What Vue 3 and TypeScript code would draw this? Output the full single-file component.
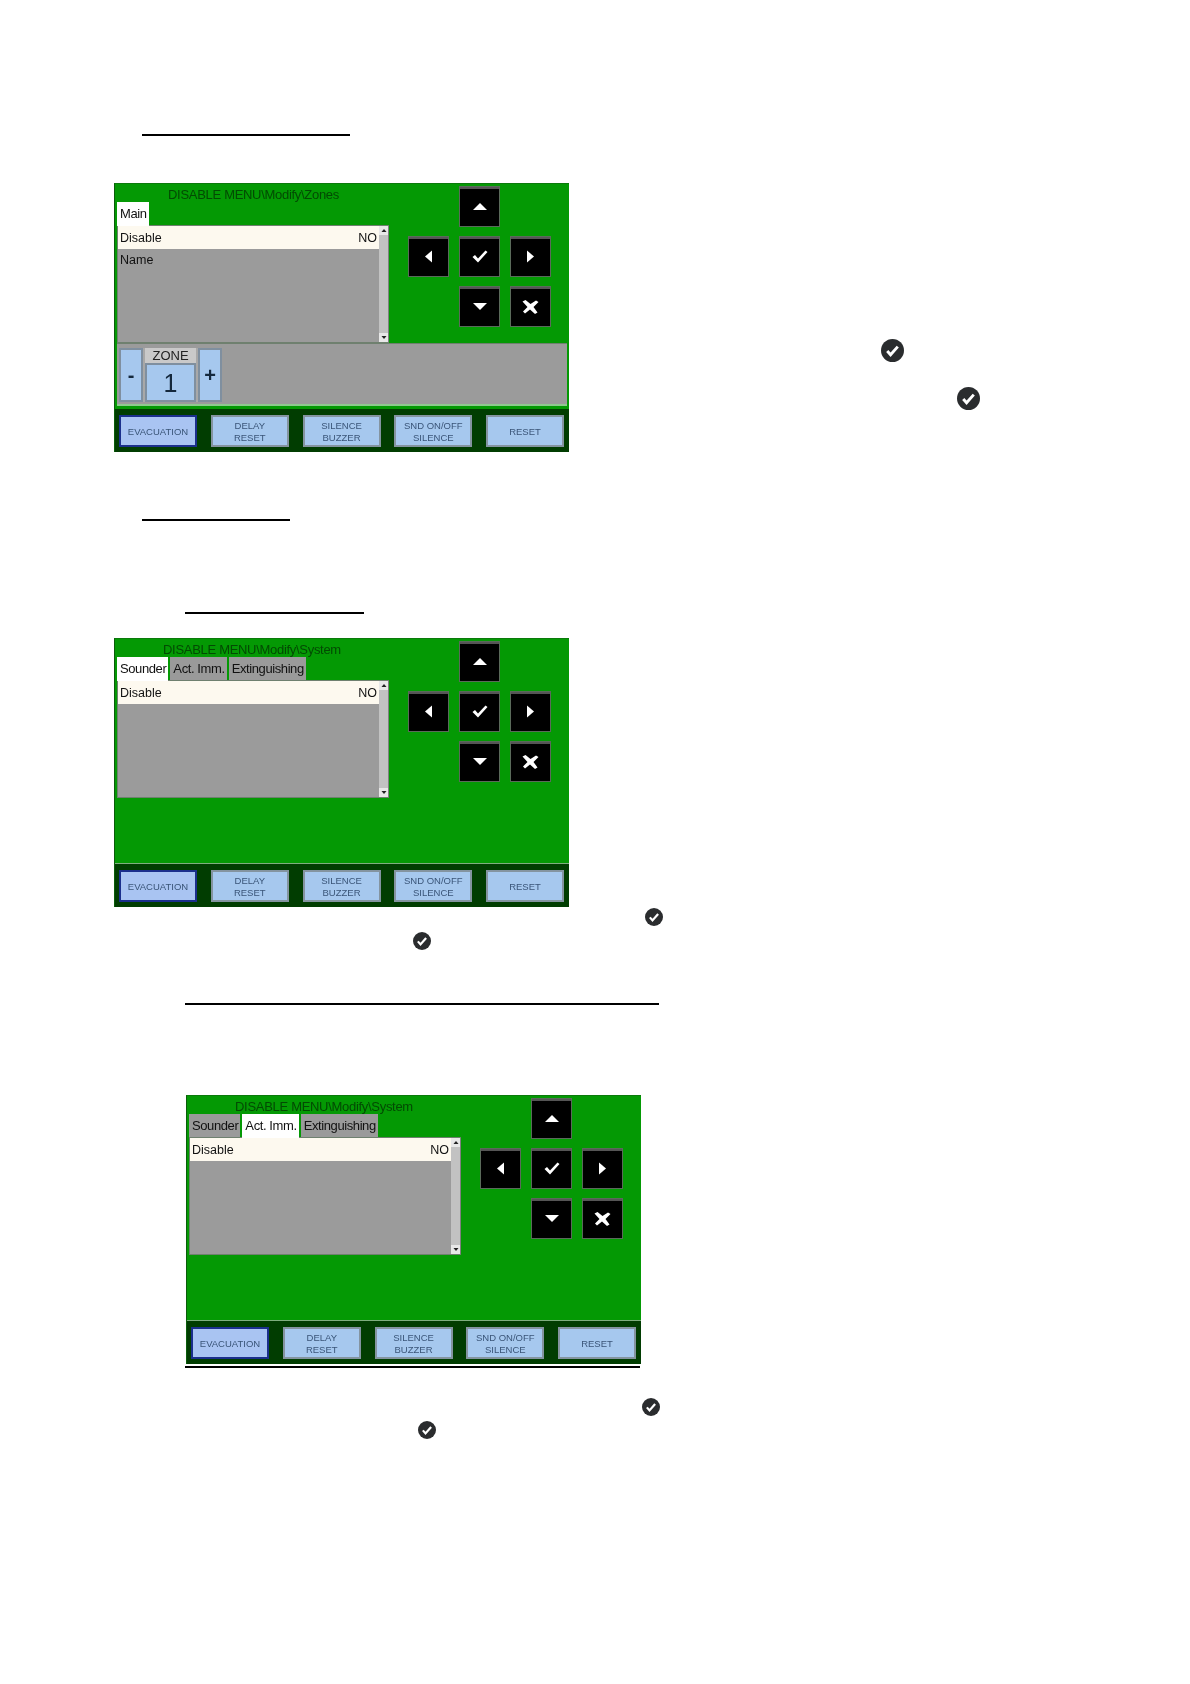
<script setup lang="ts">
interface Screen {
  title: string
  tabs: string[]
  active: number
  rows: { label: string; value?: string }[]
  zone?: boolean
}

const zones: Screen = {
  title: 'DISABLE MENU\\Modify\\Zones',
  tabs: ['Main'],
  active: 0,
  rows: [{ label: 'Disable', value: 'NO' }, { label: 'Name' }],
  zone: true,
}
const sounder: Screen = {
  title: 'DISABLE MENU\\Modify\\System',
  tabs: ['Sounder', 'Act. Imm.', 'Extinguishing'],
  active: 0,
  rows: [{ label: 'Disable', value: 'NO' }],
}
const actImm: Screen = { ...sounder, active: 1 }

const sections = [
  { screen: zones, before: 'r1', id: 'zones' },
  { screen: sounder, before: 'r3', id: 'sounder' },
  { screen: actImm, before: 'r4', id: 'act' },
]

const footer = [
  ['EVACUATION'],
  ['DELAY', 'RESET'],
  ['SILENCE', 'BUZZER'],
  ['SND ON/OFF', 'SILENCE'],
  ['RESET'],
]
</script>

<template>
  <div class="page">
    <template v-for="s in sections" :key="s.id">
      <div v-if="s.id === 'sounder'" class="rule r2"></div>
      <div class="rule" :class="s.before"></div>

      <div class="row" :class="'row-' + s.id">
        <div class="screen">
          <div class="top">
            <div class="left">
              <div class="title">{{ s.screen.title }}</div>
              <div class="tabs">
                <span
                  v-for="(t, i) in s.screen.tabs"
                  :key="t"
                  class="tab"
                  :class="{ on: i === s.screen.active }"
                >{{ t }}</span>
              </div>
              <div class="list">
                <div class="rows">
                  <div v-for="(r, i) in s.screen.rows" :key="r.label" class="item" :class="{ sel: i === 0 }">
                    <span>{{ r.label }}</span>
                    <span v-if="r.value">{{ r.value }}</span>
                  </div>
                </div>
                <div class="scroll">
                  <span class="sb"><svg width="6" height="5" viewBox="0 0 6 5"><path d="M3 1 5.500 4H.5z" /></svg></span>
                  <span class="sb"><svg width="6" height="5" viewBox="0 0 6 5"><path d="M3 4 5.500 1H.5z" /></svg></span>
                </div>
              </div>
            </div>

            <div class="nav">
              <button class="key k-up" type="button">
                <svg width="16" height="9" viewBox="0 0 16 9"><path d="M8 1 15 8H1z" /></svg>
              </button>
              <button class="key k-left" type="button">
                <svg width="9" height="13" viewBox="0 0 9 13"><path d="M1 6.500 8 .5V12.500z" /></svg>
              </button>
              <button class="key" type="button">
                <svg width="16" height="13" viewBox="0 0 16 13"><path d="M.5 7 3 5 6 8.500 13.500.5 15.500 2 6 12.500z" /></svg>
              </button>
              <button class="key" type="button">
                <svg width="9" height="13" viewBox="0 0 9 13"><path d="M8 6.500 1 .5V12.500z" /></svg>
              </button>
              <button class="key k-down" type="button">
                <svg width="16" height="9" viewBox="0 0 16 9"><path d="M8 8 15 1H1z" /></svg>
              </button>
              <button class="key" type="button">
                <svg width="17" height="14" viewBox="0 0 17 14"><path d="M.5 1.500 3.500 0 8.500 4 14 .5 16.500 2 11.500 7 15.500 12.500 13 14 8 9.500 3 13.500 1 11.500 5.500 7z" /></svg>
              </button>
            </div>
          </div>

          <div v-if="s.screen.zone" class="zonebar">
            <div class="stepper">
              <div class="step">-</div>
              <div class="zone">
                <div class="zone-label">ZONE</div>
                <div class="zone-value">1</div>
              </div>
              <div class="step">+</div>
            </div>
          </div>

          <div class="foot">
            <div v-for="(b, i) in footer" :key="i" class="fbtn" :class="{ cur: i === 0 }">
              <span v-for="l in b" :key="l">{{ l }}</span>
            </div>
          </div>
        </div>

        <div v-if="s.id === 'zones'" class="side">
          <svg class="tick big" viewBox="0 0 24 24"><circle cx="12" cy="12" r="12" /><path d="M6.500 12.500 10 16.500 17.500 8" /></svg>
          <svg class="tick big second" viewBox="0 0 24 24"><circle cx="12" cy="12" r="12" /><path d="M6.500 12.500 10 16.500 17.500 8" /></svg>
        </div>
      </div>

      <div v-if="s.id === 'act'" class="rule r5"></div>

      <div v-if="s.id === 'sounder'" class="notes n2">
        <svg class="tick a" viewBox="0 0 24 24"><circle cx="12" cy="12" r="12" /><path d="M6.500 12.500 10 16.500 17.500 8" /></svg>
        <svg class="tick b" viewBox="0 0 24 24"><circle cx="12" cy="12" r="12" /><path d="M6.500 12.500 10 16.500 17.500 8" /></svg>
      </div>
      <div v-if="s.id === 'act'" class="notes n3">
        <svg class="tick a" viewBox="0 0 24 24"><circle cx="12" cy="12" r="12" /><path d="M6.500 12.500 10 16.500 17.500 8" /></svg>
        <svg class="tick b" viewBox="0 0 24 24"><circle cx="12" cy="12" r="12" /><path d="M6.500 12.500 10 16.500 17.500 8" /></svg>
      </div>
    </template>
  </div>
</template>

<style>
html,
body {
  background: #fff;
}
</style>

<style scoped>
.page {
  height: 1684px;
  overflow: hidden;
  background: #fff;
  font-family: 'Liberation Sans', Arial, sans-serif;
  display: flow-root;
}

.rule {
  height: 2px;
  background: #000;
}
.r1 { margin: 134px 0 47px 142px; width: 208px; }
.r2 { margin: 67px 0 0 142px; width: 148px; }
.r3 { margin: 91px 0 24px 185px; width: 179px; }
.r4 { margin: 53px 0 90px 185px; width: 474px; }
.r5 { margin: 2px 0 0 185px; width: 455px; }

.row {
  display: flex;
  margin-left: 114px;
}
.row-act {
  margin-left: 186px;
}

.screen {
  width: 455px;
  height: 269px;
  box-sizing: border-box;
  background: #049904;
  border-left: 1px solid #0b5c0b;
  border-top: 1px solid #0b7a0b;
  display: flex;
  flex-direction: column;
  filter: blur(0.4px);
}

.top {
  flex: 1;
  display: flex;
  min-height: 0;
}

.left {
  width: 272px;
  padding-left: 2px;
}

.title {
  height: 18px;
  line-height: 22px;
  padding-left: 46px;
  font-size: 13px;
  letter-spacing: -0.3px;
  color: #034a03;
  white-space: nowrap;
}
.row-zones .title {
  padding-left: 51px;
}

.tabs {
  display: flex;
  gap: 2px;
  height: 23px;
}
.tab {
  padding: 0 2px 0 3px;
  font-size: 13px;
  letter-spacing: -0.4px;
  line-height: 23px;
  color: #111;
  background: #9a9a9a;
  white-space: nowrap;
}
.tab.on {
  background: #fff;
  height: 24px;
}

.list {
  display: flex;
  height: 118px;
  box-sizing: border-box;
  border: 1px solid #6f806f;
  border-right: 0;
  background: #9b9b9b;
}
.rows {
  flex: 1;
}
.item {
  height: 22.500px;
  box-sizing: border-box;
  padding: 1px 2px 0;
  display: flex;
  justify-content: space-between;
  align-items: center;
  font-size: 12.500px;
  color: #111;
}
.item.sel {
  background: #fdf9ef;
}

.scroll {
  width: 9px;
  background: #c2c2c2;
  border-right: 1px solid #808080;
  display: flex;
  flex-direction: column;
  justify-content: space-between;
}
.sb {
  height: 9px;
  background: #e8e8e8;
  display: flex;
  align-items: center;
  justify-content: center;
}
.sb svg {
  fill: #222;
}

.nav {
  display: grid;
  grid-template-columns: repeat(3, 41px);
  grid-template-rows: repeat(3, 41px);
  gap: 9px 10px;
  margin: 2px 0 0 19px;
  align-self: flex-start;
}
.key {
  padding: 0;
  box-sizing: border-box;
  background: #000;
  border: 1px solid #5a6a5a;
  box-shadow: inset 0 2px 0 #555;
  display: flex;
  align-items: center;
  justify-content: center;
}
.key svg {
  fill: #fff;
}
.k-up { grid-column: 2; }
.k-left { grid-column: 1; }
.k-down { grid-column: 2; }

.zonebar {
  height: 63px;
  margin-left: 2px;
  width: 450px;
  box-sizing: border-box;
  background: #9b9b9b;
  border-top: 1px solid #6f806f;
  border-bottom: 2px solid #8fc98f;
  padding: 4px 0 0 2px;
}
.stepper {
  display: inline-flex;
  gap: 2px;
  align-items: stretch;
  height: 54px;
  background: #a8a8a8;
}
.step {
  width: 24px;
  box-sizing: border-box;
  background: #a6c8ee;
  border: 2px solid #7f8f9f;
  display: flex;
  align-items: center;
  justify-content: center;
  font-size: 20px;
  font-weight: 700;
  color: #14283c;
}
.zone {
  width: 51px;
}
.zone-label {
  height: 15px;
  background: #c9c9c9;
  font-size: 13px;
  line-height: 15px;
  text-align: center;
  color: #222;
}
.zone-value {
  height: 39px;
  box-sizing: border-box;
  background: #a6c8ee;
  border: 2px solid #7f8f9f;
  font-size: 25px;
  line-height: 36px;
  text-align: center;
  color: #14283c;
}

.foot {
  height: 43px;
  flex-shrink: 0;
  margin-top: 3px;
  box-sizing: border-box;
  background: #013d01;
  padding: 6px 5px 5px 4px;
  display: flex;
  justify-content: space-between;
}
.row-sounder .foot,
.row-act .foot {
  height: 44px;
  margin-top: 2px;
  border-top: 1px solid #7fae7f;
}
.fbtn {
  width: 78px;
  box-sizing: border-box;
  padding-top: 1px;
  background: #a6c8ee;
  border: 2px solid #8494a0;
  display: flex;
  flex-direction: column;
  align-items: center;
  justify-content: center;
  font-size: 9.500px;
  line-height: 12px;
  color: #3a5578;
  white-space: nowrap;
}
.fbtn.cur {
  background: #a9c4f2;
  border-color: #1b2f8c;
}

.tick {
  display: block;
  width: 18px;
  height: 18px;
}
.tick circle {
  fill: #2a2c2e;
}
.tick path {
  fill: none;
  stroke: #fff;
  stroke-width: 3;
}

.side {
  padding-top: 156px;
}
.tick.big {
  width: 23px;
  height: 23px;
  margin-left: 312px;
}
.tick.big.second {
  margin: 25px 0 0 388px;
}

.notes .a { margin-left: 645px; }
.notes .b { margin-left: 413px; margin-top: 6px; }
.n2 { padding-top: 1px; }
.n3 { padding-top: 30px; }
.n3 .a { margin-left: 642px; }
.n3 .b { margin-left: 418px; margin-top: 5px; }
</style>
